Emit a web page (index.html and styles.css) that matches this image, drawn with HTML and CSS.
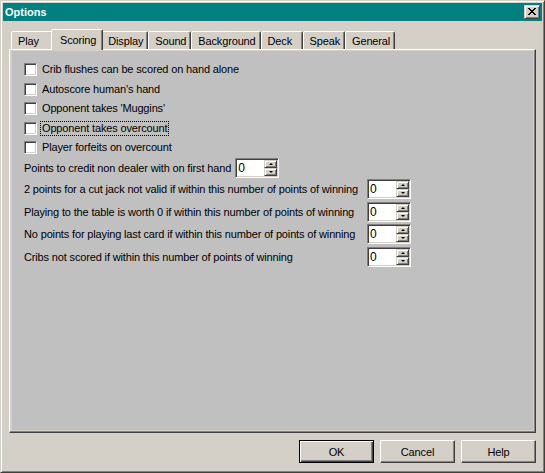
FILE: index.html
```html
<!DOCTYPE html>
<html>
<head>
<meta charset="utf-8">
<title>Options</title>
<link rel="stylesheet" href="styles.css">
</head>
<body>
<div class="window">
  <div class="titlebar">
    <span class="title">Options</span>
    <span class="close"><svg width="8" height="7" viewBox="0 0 8 7" shape-rendering="crispEdges"><path fill="#000" d="M0 0h2v1H0z M6 0h2v1H6z M1 1h2v1H1z M5 1h2v1H5z M2 2h4v1H2z M3 3h2v1H3z M2 4h4v1H2z M1 5h2v1H1z M5 5h2v1H5z M0 6h2v1H0z M6 6h2v1H6z"/></svg></span>
  </div>
  <div class="tabctl">
    <div class="tabstrip">
      <div class="tab">Play</div>
      <div class="tab active">Scoring</div>
      <div class="tab">Display</div>
      <div class="tab">Sound</div>
      <div class="tab">Background</div>
      <div class="tab">Deck</div>
      <div class="tab">Speak</div>
      <div class="tab">General</div>
    </div>
    <div class="panel">
      <div class="page">
        <div class="checks">
          <div class="check"><span class="box"></span><span class="lbl">Crib flushes can be scored on hand alone</span></div>
          <div class="check"><span class="box"></span><span class="lbl">Autoscore human's hand</span></div>
          <div class="check"><span class="box"></span><span class="lbl">Opponent takes 'Muggins'</span></div>
          <div class="check"><span class="box"></span><span class="lbl focus">Opponent takes overcount</span></div>
          <div class="check"><span class="box"></span><span class="lbl">Player forfeits on overcount</span></div>
        </div>
        <div class="row1">
          <span>Points to credit non dealer with on first hand</span>
          <div class="spin"><span class="val">0</span><span class="arrows"><span class="up"><i class="tri-up"></i></span><span class="down"><i class="tri-down"></i></span></span></div>
        </div>
        <div class="grid">
          <span>2 points for a cut jack not valid if within this number of points of winning</span>
          <div class="spin"><span class="val">0</span><span class="arrows"><span class="up"><i class="tri-up"></i></span><span class="down"><i class="tri-down"></i></span></span></div>
          <span>Playing to the table is worth 0 if within this number of points of winning</span>
          <div class="spin"><span class="val">0</span><span class="arrows"><span class="up"><i class="tri-up"></i></span><span class="down"><i class="tri-down"></i></span></span></div>
          <span>No points for playing last card if within this number of points of winning</span>
          <div class="spin"><span class="val">0</span><span class="arrows"><span class="up"><i class="tri-up"></i></span><span class="down"><i class="tri-down"></i></span></span></div>
          <span>Cribs not scored if within this number of points of winning</span>
          <div class="spin"><span class="val">0</span><span class="arrows"><span class="up"><i class="tri-up"></i></span><span class="down"><i class="tri-down"></i></span></span></div>
        </div>
      </div>
    </div>
  </div>
  <div class="buttons">
    <div class="btn default">OK</div>
    <div class="btn">Cancel</div>
    <div class="btn">Help</div>
  </div>
</div>
</body>
</html>
```
FILE: styles.css
```css
html, body {
  margin: 0;
  padding: 0;
  background: #D4D0C8;
}
body {
  font-family: "Liberation Sans", Arial, sans-serif;
  font-size: 11px;
  letter-spacing: -0.15px;
  color: #000;
}
.window {
  width: 545px;
  height: 473px;
  box-sizing: border-box;
  background: #D4D0C8;
  border: 1px solid;
  border-color: #D4D0C8 #404040 #404040 #D4D0C8;
  box-shadow: inset 1px 1px #fff, inset -1px -1px #808080;
  padding: 2px;
  display: flex;
  flex-direction: column;
}
.titlebar {
  height: 18px;
  flex: none;
  background: #008080;
  display: flex;
  align-items: center;
  justify-content: space-between;
  padding: 0 2px;
}
.title {
  color: #fff;
  font-weight: bold;
  letter-spacing: 0;
}
.close {
  width: 16px;
  height: 14px;
  box-sizing: border-box;
  background: #D4D0C8;
  border: 1px solid;
  border-color: #D4D0C8 #404040 #404040 #D4D0C8;
  box-shadow: inset 1px 1px #fff, inset -1px -1px #808080;
  display: flex;
  align-items: center;
  justify-content: center;
  padding-bottom: 1px;
}
.close svg { display: block; }
.tabctl {
  margin: 8px 6px 0 6px;
  flex: none;
}
.tabstrip {
  display: flex;
  align-items: flex-end;
  height: 20px;
  padding-left: 2px;
  position: relative;
  z-index: 1;
}
.tab {
  height: 18px;
  box-sizing: border-box;
  padding: 0 4px 0 6px;
  min-width: 42px;
  display: flex;
  align-items: center;
  justify-content: flex-start;
  border: 1px solid;
  border-bottom: none;
  border-color: #fff #404040 transparent #fff;
  box-shadow: inset -1px 0 #808080;
  border-radius: 2px 2px 0 0;
  background: #D4D0C8;
  white-space: nowrap;
}
.tab.active {
  height: 21px;
  margin: 0 -2px -1px -2px;
  padding: 0 6px 1px 8px;
  position: relative;
  z-index: 2;
}
.panel {
  height: 384px;
  box-sizing: border-box;
  border: 1px solid;
  border-color: #fff #404040 #404040 #fff;
  box-shadow: inset -1px -1px #808080;
  padding: 1px 2px 2px 2px;
  display: flex;
}
.page {
  flex: 1;
  background: #C0C0C0;
  padding: 12px;
  display: flex;
  flex-direction: column;
}
.checks {
  display: flex;
  flex-direction: column;
  gap: 6.5px;
}
.check {
  display: flex;
  align-items: center;
  height: 13px;
}
.box {
  width: 13px;
  height: 13px;
  flex: none;
  box-sizing: border-box;
  background: #fff;
  border: 1px solid;
  border-color: #808080 #fff #fff #808080;
  box-shadow: inset 1px 1px #404040, inset -1px -1px #D4D0C8;
}
.lbl {
  margin-left: 3px;
  padding: 0 1px;
  border: 1px solid transparent;
  line-height: 13px;
  white-space: nowrap;
}
.lbl.focus {
  border: 1px dotted #000;
}
.row1 {
  display: flex;
  align-items: center;
  gap: 4px;
  margin-top: 4px;
  height: 20px;
}
.grid {
  display: grid;
  grid-template-columns: 343px 44px;
  grid-auto-rows: 20px;
  row-gap: 2.5px;
  margin-top: 1px;
  align-items: center;
  white-space: nowrap;
}
.spin {
  display: flex;
  width: 44px;
  height: 20px;
  box-sizing: border-box;
  border: 1px solid;
  border-color: #808080 #fff #fff #808080;
  box-shadow: inset 1px 1px #404040, inset -1px -1px #D4D0C8;
  background: #fff;
  padding: 1px;
}
.val {
  flex: 1;
  font-size: 12px;
  line-height: 16px;
  padding-left: 1px;
}
.arrows {
  display: flex;
  flex-direction: column;
  width: 13px;
}
.arrows > span {
  height: 8px;
  box-sizing: border-box;
  border: 1px solid;
  border-color: #D4D0C8 #404040 #404040 #D4D0C8;
  box-shadow: inset 1px 1px #fff, inset -1px -1px #808080;
  background: #D4D0C8;
  display: flex;
  align-items: center;
  justify-content: center;
}
.tri-up, .tri-down {
  display: block;
  width: 0;
  height: 0;
  border-left: 2px solid transparent;
  border-right: 2px solid transparent;
}
.tri-up { border-bottom: 2px solid #000; }
.tri-down { border-top: 2px solid #000; }
.buttons {
  display: flex;
  justify-content: flex-end;
  gap: 6px;
  margin: 7px 6px 0 0;
  flex: none;
}
.btn {
  width: 75px;
  height: 23px;
  box-sizing: border-box;
  display: flex;
  align-items: center;
  justify-content: center;
  border: 1px solid;
  border-color: #fff #404040 #404040 #fff;
  box-shadow: inset -1px -1px #808080, inset 1px 1px #D4D0C8;
  background: #D4D0C8;
}
.btn.default {
  border-color: #000;
  box-shadow: inset 1px 1px #fff, inset -1px -1px #404040, inset -2px -2px #808080;
}
```
